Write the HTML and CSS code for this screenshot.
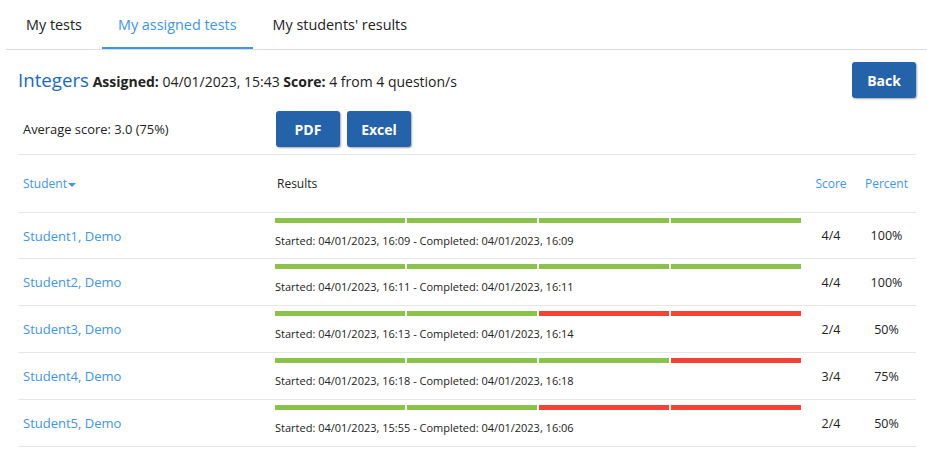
FILE: index.html
```html
<!DOCTYPE html>
<html lang="en">
<head>
    <meta charset="UTF-8">
    <meta name="viewport" content="width=device-width, initial-scale=1.0">
    <title>My assigned tests</title>
    <link rel="stylesheet" href="styles.css">
</head>
<body>

    <div class="tabs">
        <a class="tab" href="#">My tests</a>
        <a class="tab active" href="#">My assigned tests</a>
        <a class="tab" href="#">My students' results</a>
    </div>

    <div class="content">
        <div class="title-row">
            <div class="title">
                <span class="test-name">Integers</span>
                <b>Assigned:</b> 04/01/2023, 15:43
                <b>Score:</b> 4 from 4 question/s
            </div>
            <button class="btn">Back</button>
        </div>

        <div class="summary">
            <span class="average">Average score: 3.0 (75%)</span>
            <div class="exports">
                <button class="btn">PDF</button>
                <button class="btn">Excel</button>
            </div>
        </div>

        <div class="results">
            <div class="row head">
                <div class="cell name"><a href="#">Student<span class="caret"></span></a></div>
                <div class="cell">Results</div>
                <div class="cell num"><a href="#">Score</a></div>
                <div class="cell num"><a href="#">Percent</a></div>
            </div>

            <div class="row">
                <div class="cell name"><a href="#">Student1, Demo</a></div>
                <div class="cell attempt">
                    <div class="bars"><i class="ok"></i><i class="ok"></i><i class="ok"></i><i class="ok"></i></div>
                    <div class="times">Started: 04/01/2023, 16:09 - Completed: 04/01/2023, 16:09</div>
                </div>
                <div class="cell num">4/4</div>
                <div class="cell num">100%</div>
            </div>

            <div class="row">
                <div class="cell name"><a href="#">Student2, Demo</a></div>
                <div class="cell attempt">
                    <div class="bars"><i class="ok"></i><i class="ok"></i><i class="ok"></i><i class="ok"></i></div>
                    <div class="times">Started: 04/01/2023, 16:11 - Completed: 04/01/2023, 16:11</div>
                </div>
                <div class="cell num">4/4</div>
                <div class="cell num">100%</div>
            </div>

            <div class="row">
                <div class="cell name"><a href="#">Student3, Demo</a></div>
                <div class="cell attempt">
                    <div class="bars"><i class="ok"></i><i class="ok"></i><i class="bad"></i><i class="bad"></i></div>
                    <div class="times">Started: 04/01/2023, 16:13 - Completed: 04/01/2023, 16:14</div>
                </div>
                <div class="cell num">2/4</div>
                <div class="cell num">50%</div>
            </div>

            <div class="row">
                <div class="cell name"><a href="#">Student4, Demo</a></div>
                <div class="cell attempt">
                    <div class="bars"><i class="ok"></i><i class="ok"></i><i class="ok"></i><i class="bad"></i></div>
                    <div class="times">Started: 04/01/2023, 16:18 - Completed: 04/01/2023, 16:18</div>
                </div>
                <div class="cell num">3/4</div>
                <div class="cell num">75%</div>
            </div>

            <div class="row">
                <div class="cell name"><a href="#">Student5, Demo</a></div>
                <div class="cell attempt">
                    <div class="bars"><i class="ok"></i><i class="ok"></i><i class="bad"></i><i class="bad"></i></div>
                    <div class="times">Started: 04/01/2023, 15:55 - Completed: 04/01/2023, 16:06</div>
                </div>
                <div class="cell num">2/4</div>
                <div class="cell num">50%</div>
            </div>
        </div>
    </div>

</body>
</html>
```

FILE: styles.css
```css
body {
    margin: 0;
    font-family: 'Open Sans', sans-serif;
    color: #222;
    background: #fff;
}

a {
    text-decoration: none;
}

/* top tabs */
.tabs {
    display: flex;
    margin-left: 6px;
    border-bottom: 1px solid #ddd;
}

.tab {
    display: block;
    padding: 0 20px;
    height: 47px;
    line-height: 49px;
    font-size: 14.4px;
    color: #222;
    border-bottom: 2px solid transparent;
}

.tab.active {
    padding: 0 16px;
    color: #3d95ec;
    border-bottom-color: #3d95ec;
}

.content {
    margin: 0 11px 0 18px;
}

/* title and back button */
.title-row {
    display: flex;
    justify-content: space-between;
    align-items: center;
    padding-top: 12px;
}

.title {
    font-size: 14px;
    color: #222;
    margin-top: -2px;
}

.title b {
    font-weight: 700;
}

.test-name {
    font-size: 18.7px;
    color: #1a68c4;
}

.btn {
    font-family: 'Open Sans', sans-serif;
    font-size: 14px;
    font-weight: 700;
    color: #fff;
    background: #2462a9;
    border: none;
    border-radius: 3px;
    width: 64px;
    height: 36px;
    box-shadow: 1px 1px 2px rgba(0, 0, 0, 0.35);
    cursor: pointer;
}

/* average + exports */
.summary {
    display: flex;
    align-items: center;
    padding: 13px 0 7px 5px;
    border-bottom: 1px solid #e6e6e6;
}

.average {
    width: 253px;
    font-size: 12.9px;
}

.exports {
    display: flex;
    gap: 7px;
}

/* results table */
.row {
    display: grid;
    grid-template-columns: 255px 532px 52px 59px;
    height: 46px;
    border-bottom: 1px solid #e6e6e6;
}

.row.head {
    height: 57px;
    align-items: center;
    font-size: 12px;
}

.row.head + .row {
    height: 45px;
}

.cell {
    align-self: center;
}

.name {
    padding: 0 0 2px 5px;
}

.name a {
    color: #3d95ec;
    font-size: 13px;
}

.head .name {
    padding-bottom: 0;
}

.head .name a {
    font-size: 12px;
}

.head .cell:nth-child(2) {
    padding-left: 4px;
}

.caret {
    display: inline-block;
    margin-left: 1px;
    vertical-align: middle;
    border-left: 4px solid transparent;
    border-right: 4px solid transparent;
    border-top: 4px solid #3d95ec;
}

.num {
    text-align: center;
    font-size: 12.5px;
}

.num a {
    color: #3d95ec;
    font-size: 12px;
}

.attempt {
    align-self: start;
    padding: 5px 0 0 2px;
}

.bars {
    display: flex;
    gap: 2px;
    width: 526px;
}

.bars i {
    flex: 1;
    height: 5px;
}

.bars .ok {
    background: #8bc34a;
}

.bars .bad {
    background: #f44336;
}

.times {
    margin-top: 10px;
    font-size: 11px;
    color: #222;
}
```
